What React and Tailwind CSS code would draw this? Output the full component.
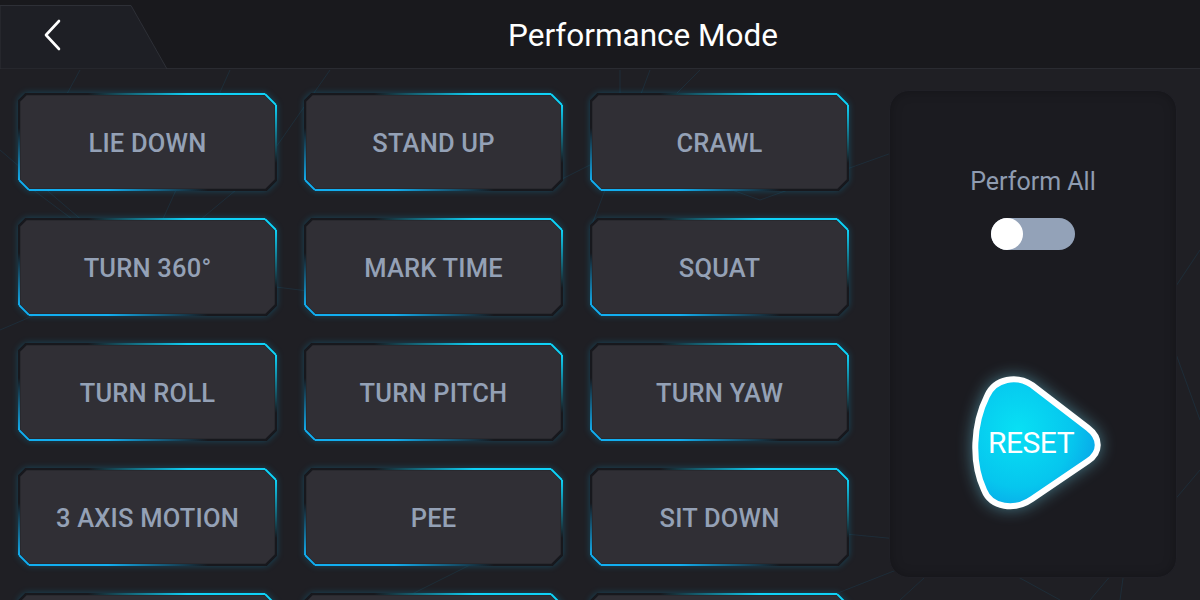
import React, { useState } from 'react';

const ACTIONS = [
  'LIE DOWN', 'STAND UP', 'CRAWL',
  'TURN 360°', 'MARK TIME', 'SQUAT',
  'TURN ROLL', 'TURN PITCH', 'TURN YAW',
  '3 AXIS MOTION', 'PEE', 'SIT DOWN',
  '', '', '',
];

// chamfered frame: tl 7, tr 11, br 10, bl 10
const W = 259;
const H = 98;
const FRAME = `M8 1 L${W - 12} 1 L${W - 1} 12 L${W - 1} ${H - 11} L${W - 11} ${H - 1} L11 ${H - 1} L1 ${H - 11} L1 8 Z`;

const ActionButton = ({ label }) => (
  <button className="relative flex items-center justify-center w-[259px] h-[98px] cursor-pointer">
    <svg className="absolute inset-0 drop-shadow-[0_0_3px_rgba(0,190,255,0.25)]" width={W} height={H} viewBox={`0 0 ${W} ${H}`}>
      <defs>
        <linearGradient id="topEdge" gradientUnits="userSpaceOnUse" x1="70" y1="0" x2="170" y2="0">
          <stop offset="0" stopColor="#0fd2f7" stopOpacity="0" />
          <stop offset="1" stopColor="#0fd2f7" stopOpacity="1" />
        </linearGradient>
        <linearGradient id="rightEdge" gradientUnits="userSpaceOnUse" x1="0" y1="12" x2="0" y2="70">
          <stop offset="0" stopColor="#0fd2f7" stopOpacity="1" />
          <stop offset="1" stopColor="#0fd2f7" stopOpacity="0" />
        </linearGradient>
        <linearGradient id="leftEdge" gradientUnits="userSpaceOnUse" x1="0" y1="35" x2="0" y2="88">
          <stop offset="0" stopColor="#12aef0" stopOpacity="0" />
          <stop offset="1" stopColor="#12aef0" stopOpacity="1" />
        </linearGradient>
        <linearGradient id="bottomEdge" gradientUnits="userSpaceOnUse" x1="90" y1="0" x2="190" y2="0">
          <stop offset="0" stopColor="#12aef0" stopOpacity="1" />
          <stop offset="1" stopColor="#12aef0" stopOpacity="0" />
        </linearGradient>
      </defs>
      <path d={FRAME} fill="#302f35" stroke="#17181d" strokeWidth="2.5" />
      <path d={`M70 1 L${W - 12} 1`} stroke="url(#topEdge)" strokeWidth="2" />
      <path d={`M${W - 12} 1 L${W - 1} 12`} stroke="#0fd2f7" strokeWidth="2" fill="none" />
      <path d={`M${W - 1} 12 L${W - 1} 70`} stroke="url(#rightEdge)" strokeWidth="2" />
      <path d={`M1 35 L1 ${H - 11}`} stroke="url(#leftEdge)" strokeWidth="2" />
      <path d={`M1 ${H - 11} L11 ${H - 1}`} stroke="#12aef0" strokeWidth="2" fill="none" />
      <path d={`M11 ${H - 1} L190 ${H - 1}`} stroke="url(#bottomEdge)" strokeWidth="2" />
    </svg>
    {label && (
      <span className="relative mt-[3px] text-[25.5px] font-medium text-[#94a1b6] tracking-[0.2px]">{label}</span>
    )}
  </button>
);

const Network = () => (
  <svg className="absolute inset-0 pointer-events-none" width="1200" height="600" viewBox="0 0 1200 600">
    <g stroke="#1d3646" strokeWidth="1" opacity="0.6" fill="none">
      <path d="M0 150 L140 270 L0 330" />
      <path d="M80 70 L20 180 L140 270 L260 170 L330 70" />
      <path d="M230 70 L140 270 L380 300" />
      <path d="M620 70 L620 150 L560 180" />
      <path d="M700 70 L620 150 L760 200 L900 150" />
      <path d="M650 70 L620 150 L590 230" />
      <path d="M1200 250 L1160 310 L1200 420" />
      <path d="M1110 280 L1160 310 L1120 600" />
      <path d="M960 545 L820 600 M960 545 L700 520 M960 545 L1060 600 M960 545 L1130 510 M960 545 L900 600" />
      <path d="M1200 470 L1090 600" />
      <path d="M560 480 L480 560 L400 600" />
    </g>
  </svg>
);

const ResetButton = () => (
  <button className="relative w-[146px] h-[146px] flex items-center justify-center cursor-pointer">
    <svg className="absolute inset-0 drop-shadow-[0_0_8px_rgba(120,230,255,0.45)]" width="146" height="146" viewBox="0 0 146 146">
      <defs>
        <radialGradient id="resetFill" cx="0.35" cy="0.4" r="0.75">
          <stop offset="0" stopColor="#08e0f4" />
          <stop offset="0.6" stopColor="#06c6ee" />
          <stop offset="1" stopColor="#0a9ce6" />
        </radialGradient>
      </defs>
      <path
        d="M26 24 C34 6 56 3 71 13 L127 56 C140 66 140 80 127 89 L71 127 C54 139 30 136 23 118 C10 90 12 52 26 24 Z"
        fill="url(#resetFill)"
        stroke="#ffffff"
        strokeWidth="6"
        strokeLinejoin="round"
      />
    </svg>
    <span className="relative text-[30px] text-white ml-[-6px] mt-[-5px] tracking-[-0.5px]">RESET</span>
  </button>
);

export default function App() {
  const [performAll, setPerformAll] = useState(false);

  return (
    <div className="relative w-[1200px] h-[600px] overflow-hidden bg-[#1f1f24] font-['Roboto','Liberation_Sans',sans-serif]">
      <Network />

      {/* header */}
      <div className="relative h-[69px] bg-[#19191d] border-b border-[#2a2b31] flex items-center justify-center">
        <svg className="absolute left-0 top-0" width="170" height="69" viewBox="0 0 170 69">
          <path d="M0 5.5 L131 5.5 L167 69 L0 69 Z" fill="#1e1f25" stroke="#2e3037" strokeWidth="1" />
        </svg>
        <button className="absolute left-[38px] top-[16px] w-[30px] h-[38px] flex items-center justify-center">
          <svg width="20" height="32" viewBox="0 0 20 32" fill="none">
            <path d="M16 2 L3 16 L16 30" stroke="#ffffff" strokeWidth="2.6" strokeLinecap="round" strokeLinejoin="round" />
          </svg>
        </button>
        <h1 className="text-[31.5px] text-white ml-[86px] mt-[4px]">Performance Mode</h1>
      </div>

      {/* body */}
      <div className="relative flex pl-[18px] pr-[22px] pt-[24px]">
        <div className="grid grid-cols-[repeat(3,259px)] auto-rows-[98px] gap-x-[27px] gap-y-[27px]">
          {ACTIONS.map((a, i) => (
            <ActionButton key={i} label={a} />
          ))}
        </div>

        <div className="ml-[40px] mt-[-3px] w-[288px] h-[488px] rounded-[20px] bg-[#1b1b20] border border-[#202026] shadow-[inset_0_0_12px_rgba(0,0,0,0.25)] flex flex-col items-center">
          <p className="mt-[72px] text-[25px] text-[#8f9cb1]">Perform All</p>
          <button
            onClick={() => setPerformAll(!performAll)}
            className={`mt-[17px] w-[84px] h-[32px] rounded-full bg-[#93a2b8] flex items-center ${performAll ? 'justify-end' : 'justify-start'}`}
          >
            <span className="w-[32px] h-[32px] rounded-full bg-white block" />
          </button>
          <div className="mt-[122px] ml-[2px]">
            <ResetButton />
          </div>
        </div>
      </div>
    </div>
  );
}
